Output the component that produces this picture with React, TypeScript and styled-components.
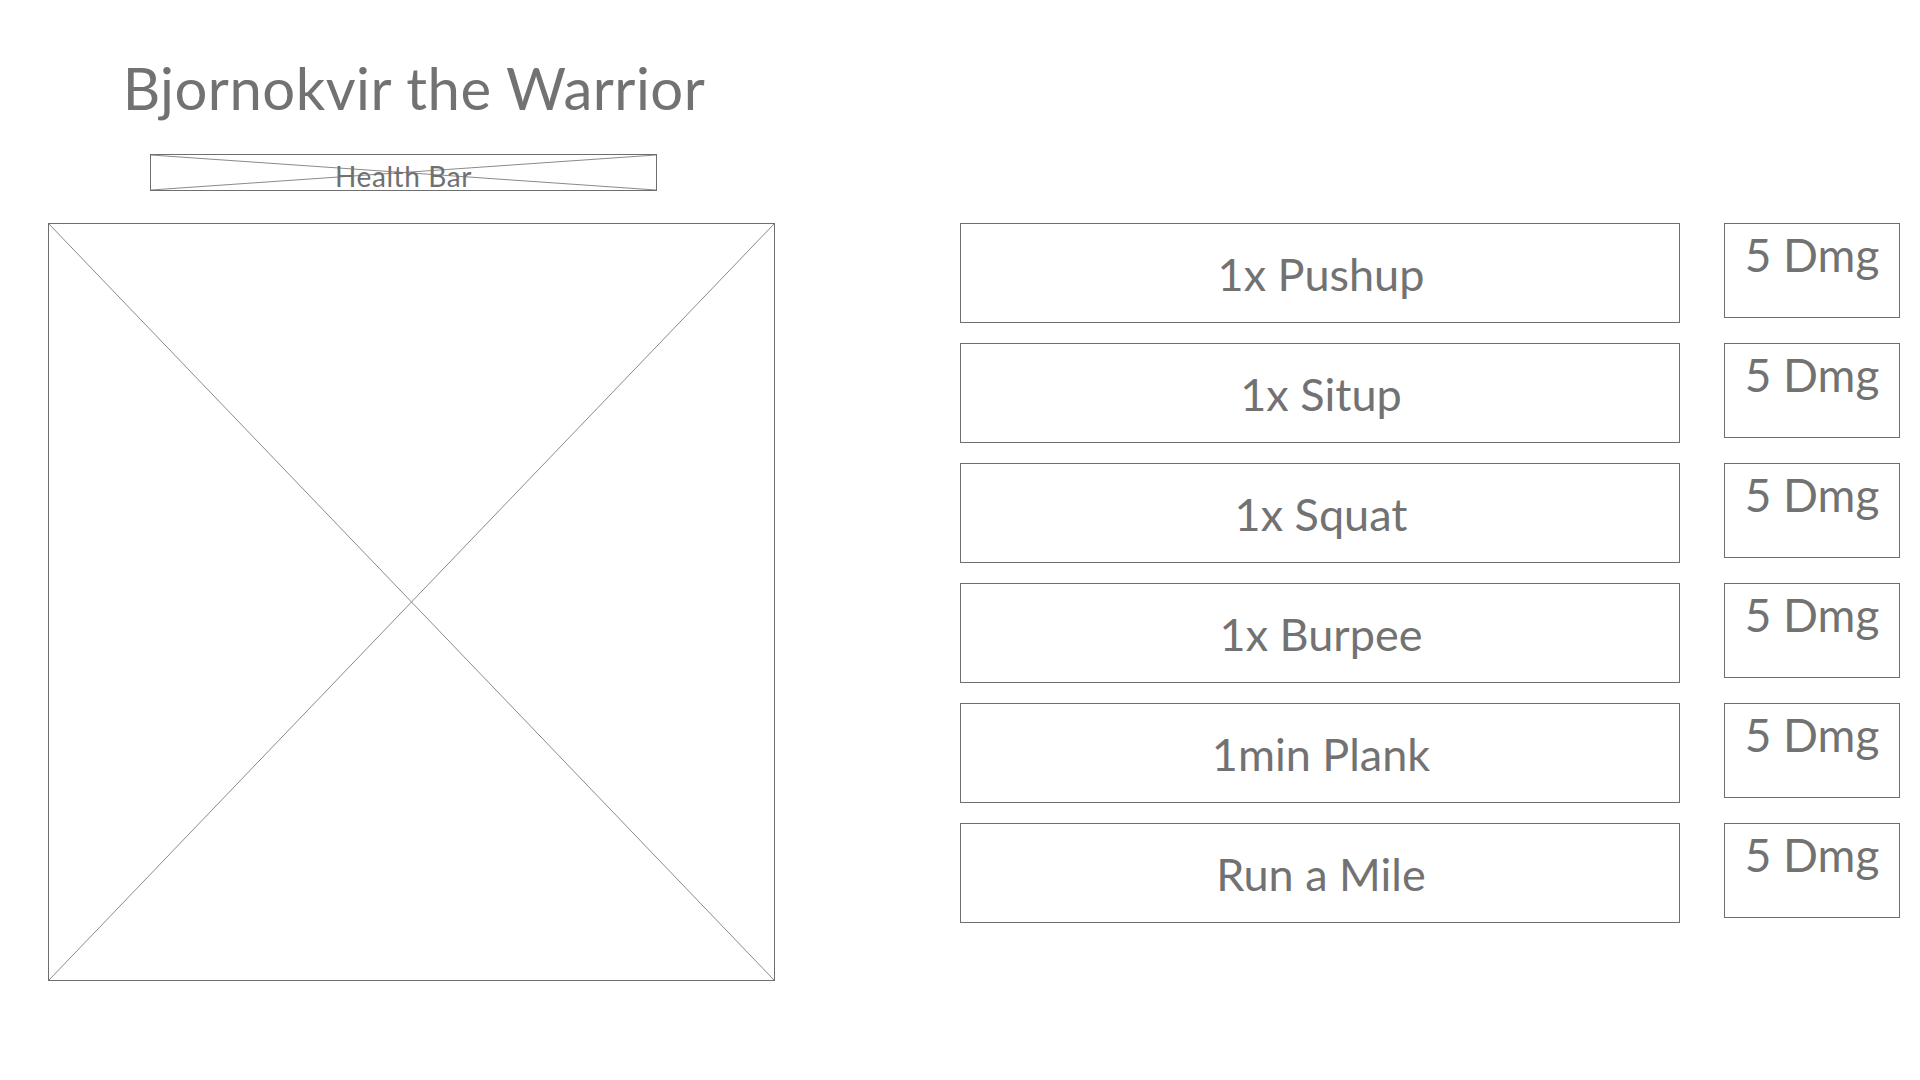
import React from "react";
import styled, { createGlobalStyle } from "styled-components";

const GlobalStyle = createGlobalStyle`
  html, body {
    margin: 0;
    padding: 0;
    background: #ffffff;
  }
  body {
    font-family: Lato, "Open Sans", "Liberation Sans", sans-serif;
    color: #707070;
  }
  * { box-sizing: border-box; }
`;

const Page = styled.div`
  width: 1920px;
  height: 1080px;
  padding: 59px 0 0 48px;
  display: flex;
  flex-direction: column;
  align-items: flex-start;
`;

const Header = styled.header`
  width: 727px;
  display: flex;
  flex-direction: column;
`;

const Title = styled.h1`
  margin: 0;
  padding-left: 5px;
  font-family: Lato, "Open Sans", sans-serif;
  font-weight: 400;
  font-size: 58px;
  line-height: 1;
  color: #727272;
  text-align: center;
  letter-spacing: 0.5px;
`;

const HealthBar = styled.div`
  position: relative;
  margin: 37px 0 0 102px;
  width: 507px;
  height: 37px;
  border: 1px solid #6e6e6e;
  padding-top: 5px;
  font-size: 28px;
  line-height: 1.15;
  text-align: center;
  letter-spacing: 0.6px;
  color: #707070;
`;

const HealthLabel = styled.span`
  position: relative;
`;

const CrossSvg = styled.svg<{ $overlay?: boolean }>`
  display: block;
  width: 100%;
  height: 100%;
  ${(p) =>
    p.$overlay
      ? `position: absolute; left: 0; top: 0;`
      : ``}
`;

const Main = styled.main`
  margin-top: 32px;
  display: flex;
  align-items: flex-start;
`;

const Portrait = styled.div`
  width: 727px;
  height: 758px;
  border: 1px solid #6e6e6e;
`;

const ExerciseList = styled.ul`
  list-style: none;
  margin: 0 0 0 185px;
  padding: 0;
  display: flex;
  flex-direction: column;
  gap: 20px;
`;

const ExerciseRow = styled.li`
  display: flex;
  align-items: flex-start;
  gap: 44px;
`;

const ExerciseButton = styled.button`
  width: 720px;
  height: 100px;
  border: 1px solid #6e6e6e;
  background: #ffffff;
  display: flex;
  align-items: center;
  justify-content: center;
  padding: 2px 0 0 2px;
  font-family: Lato, "Open Sans", sans-serif;
  font-size: 45px;
  line-height: 1.2;
  color: #727272;
  cursor: pointer;
`;

const Damage = styled.div`
  width: 176px;
  height: 95px;
  border: 1px solid #6e6e6e;
  padding-top: 3px;
  text-align: center;
  font-size: 46px;
  line-height: 1.2;
  color: #727272;
`;

const Cross: React.FC<{ overlay?: boolean }> = ({ overlay }) => (
  <CrossSvg
    $overlay={overlay}
    viewBox="0 0 100 100"
    preserveAspectRatio="none"
    aria-hidden="true"
  >
    <line x1="0" y1="0" x2="100" y2="100" stroke="#8a8a8a" strokeWidth="1" vectorEffect="non-scaling-stroke" />
    <line x1="0" y1="100" x2="100" y2="0" stroke="#8a8a8a" strokeWidth="1" vectorEffect="non-scaling-stroke" />
  </CrossSvg>
);

const exercises = [
  { name: "1x Pushup", dmg: 5 },
  { name: "1x Situp", dmg: 5 },
  { name: "1x Squat", dmg: 5 },
  { name: "1x Burpee", dmg: 5 },
  { name: "1min Plank", dmg: 5 },
  { name: "Run a Mile", dmg: 5 },
];

export default function App() {
  return (
    <>
      <GlobalStyle />
      <Page>
        <Header>
          <Title>Bjornokvir the Warrior</Title>
          <HealthBar>
            <Cross overlay />
            <HealthLabel>Health Bar</HealthLabel>
          </HealthBar>
        </Header>
        <Main>
          <Portrait>
            <Cross />
          </Portrait>
          <ExerciseList>
            {exercises.map((e) => (
              <ExerciseRow key={e.name}>
                <ExerciseButton>{e.name}</ExerciseButton>
                <Damage>{e.dmg} Dmg</Damage>
              </ExerciseRow>
            ))}
          </ExerciseList>
        </Main>
      </Page>
    </>
  );
}
